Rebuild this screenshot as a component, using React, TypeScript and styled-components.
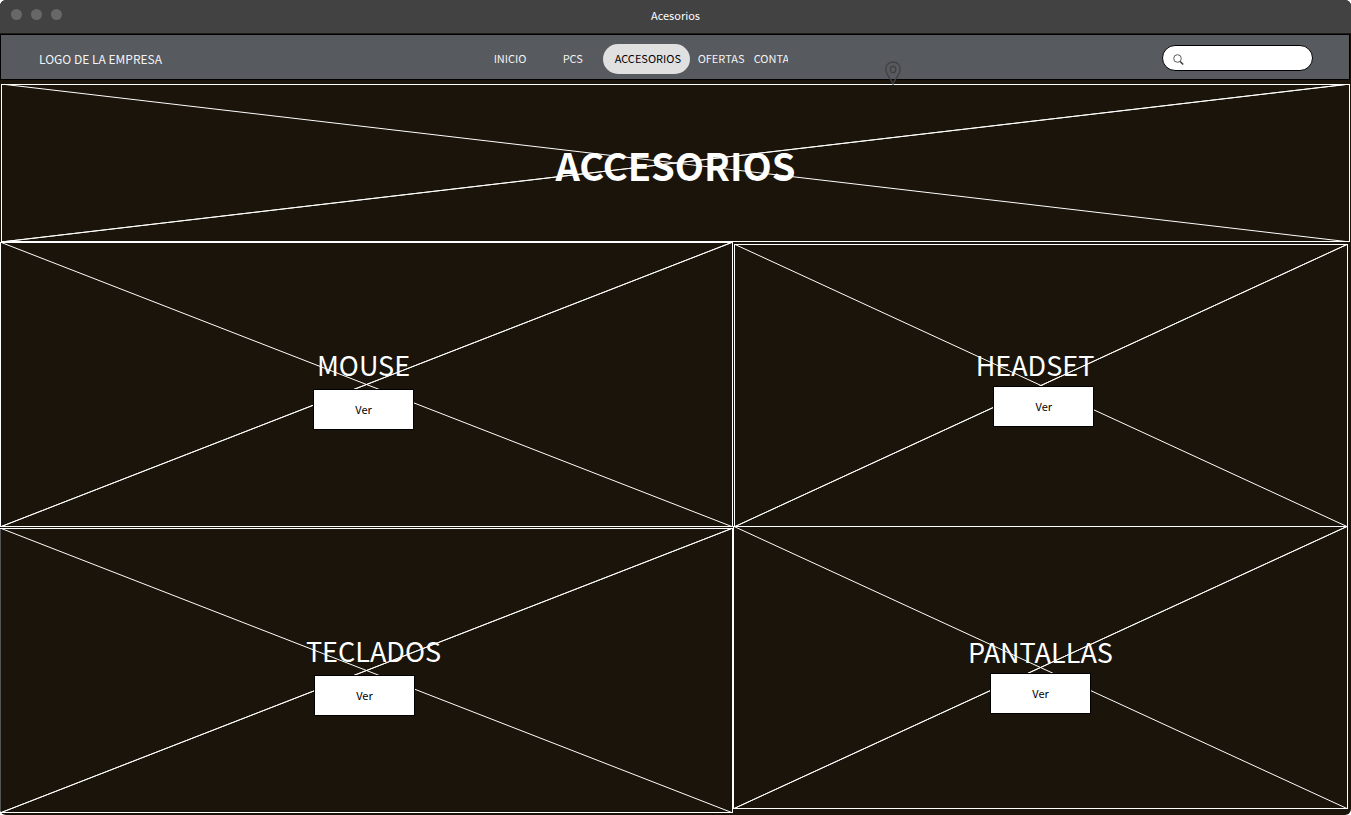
import React from 'react';
import styled, { createGlobalStyle } from 'styled-components';

const GlobalStyle = createGlobalStyle`
  * { box-sizing: border-box; }
  body {
    margin: 0;
    background: #ffffff;
    color: #ffffff;
    font-family: "Noto Sans CJK JP", "Noto Sans", sans-serif;
    font-size: 11px;
    line-height: 20px;
  }
`;

const Window = styled.div`
  display: flex;
  flex-direction: column;
  min-height: 100vh;
  overflow: hidden;
  border-radius: 6px;
  background: #1a140a;
`;

const TitleBar = styled.header`
  display: grid;
  grid-template-columns: 1fr auto 1fr;
  align-items: center;
  height: 34px;
  padding: 0 11px 4px;
  background: #424242;
  border-bottom: 1px solid #1e1c18;
`;

const WindowDots = styled.div`
  display: flex;
  gap: 9px;
`;

const Dot = styled.span`
  width: 11px;
  height: 11px;
  border-radius: 50%;
  background: #676767;
`;

const NavBar = styled.div`
  position: relative;
  display: grid;
  grid-template-columns: 455fr 820fr;
  align-items: center;
  height: 46px;
  margin-right: 1px;
  padding: 0 36px 0 38px;
  background: #575a5f;
  border: 1px solid #000000;
`;

const Logo = styled.a`
  color: #f4f4f4;
  font-size: 12px;
  text-decoration: none;
  padding-top: 4px;
`;

const NavArea = styled.div`
  display: flex;
  align-items: center;
  justify-content: space-between;
  padding-top: 2px;
`;

const Links = styled.nav`
  display: flex;
  align-items: center;
  padding-top: 2px;
`;

const NavLink = styled.a<{ $width: number; $active?: boolean }>`
  width: ${(p) => p.$width}px;
  height: 30px;
  line-height: 28px;
  overflow: hidden;
  white-space: nowrap;
  text-decoration: none;
  border-radius: 15px;
  color: ${(p) => (p.$active ? '#000000' : '#f4f4f4')};
  background: ${(p) => (p.$active ? '#e0e0e0' : 'transparent')};
  padding-left: ${(p) => (p.$active ? 12 : 0)}px;
  margin-right: ${(p) => (p.$active ? 8 : 0)}px;
`;

const ClippedLink = styled(NavLink)`
  border-radius: 0;
`;

const SearchBox = styled.label`
  display: flex;
  align-items: center;
  gap: 4px;
  width: 151px;
  height: 26px;
  padding: 0 10px;
  border: 1px solid #000000;
  border-radius: 13px;
  background: #ffffff;
`;

const SearchIcon = styled.svg`
  flex: none;
  width: 11px;
  height: 11px;
  margin-top: 3px;
`;

const SearchInput = styled.input`
  flex: 1;
  min-width: 0;
  padding: 0;
  border: 0;
  outline: 0;
  background: transparent;
  font: inherit;
`;

const Pin = styled.svg`
  position: absolute;
  top: 26px;
  left: 66%;
  margin-left: -6px;
  width: 16px;
  height: 24px;
  z-index: 1;
`;

const Placeholder = styled.svg`
  position: absolute;
  inset: 0;
  width: 100%;
  height: 100%;
`;

const Hero = styled.section`
  position: relative;
  display: flex;
  align-items: center;
  justify-content: center;
  height: 158px;
  margin: 4px 1px 0;
`;

const HeroTitle = styled.h1`
  position: relative;
  margin: 0;
  padding-top: 4px;
  font-size: 38px;
  line-height: 64px;
  font-weight: 700;
`;

const Columns = styled.main`
  display: flex;
  align-items: flex-start;
  padding-right: 3px;
`;

const LeftColumn = styled.div`
  display: flex;
  flex-direction: column;
  flex: 733 1 0;
  gap: 1px;
`;

const RightColumn = styled.div`
  display: flex;
  flex-direction: column;
  flex: 615 1 0;
  padding-top: 2px;
`;

const Tile = styled.section<{ $height: number; $padding: string; $margin?: string }>`
  position: relative;
  display: flex;
  justify-content: center;
  height: ${(p) => p.$height}px;
  padding: ${(p) => p.$padding};
  margin: ${(p) => p.$margin ?? '0'};
`;

const TileContent = styled.div<{ $align: string; $gap: number; $inset: number }>`
  position: relative;
  display: flex;
  flex-direction: column;
  align-items: ${(p) => p.$align};
  gap: ${(p) => p.$gap}px;
  & > button { margin-left: ${(p) => p.$inset}px; }
`;

const TileTitle = styled.h2`
  margin: 0;
  font-size: 27px;
  line-height: 40px;
  font-weight: 400;
`;

const ViewButton = styled.button`
  width: 101px;
  height: 41px;
  padding: 0 0 2px;
  border: 1px solid #000000;
  background: #ffffff;
  color: #000000;
  font: inherit;
  cursor: pointer;
`;

function CrossedBox({ leftEdge = '#ffffff' }: { leftEdge?: string }) {
  return (
    <Placeholder aria-hidden="true" stroke="#ffffff" strokeWidth="1">
      <line x1="0" y1="0" x2="100%" y2="100%" />
      <line x1="0" y1="100%" x2="100%" y2="0" />
      <line x1="0" y1="100%" x2="100%" y2="0" />
      <line x1="0" y1="0" x2="0" y2="100%" strokeWidth="2" stroke={leftEdge} />
      <line x1="0" y1="0" x2="100%" y2="0" strokeWidth="2" />
      <line x1="100%" y1="0" x2="100%" y2="100%" strokeWidth="2" />
      <line x1="0" y1="100%" x2="100%" y2="100%" strokeWidth="2" />
    </Placeholder>
  );
}

interface CategoryProps {
  title: string;
  height: number;
  padding: string;
  margin?: string;
  align?: string;
  gap: number;
  inset?: number;
  leftEdge?: string;
}

function Category({ title, height, padding, margin, align = 'center', gap, inset = 0, leftEdge }: CategoryProps) {
  return (
    <Tile $height={height} $padding={padding} $margin={margin}>
      <CrossedBox leftEdge={leftEdge} />
      <TileContent $align={align} $gap={gap} $inset={inset}>
        <TileTitle>{title}</TileTitle>
        <ViewButton type="button">Ver</ViewButton>
      </TileContent>
    </Tile>
  );
}

export default function App() {
  return (
    <>
      <GlobalStyle />
      <Window>
        <TitleBar>
          <WindowDots>
            <Dot />
            <Dot />
            <Dot />
          </WindowDots>
          <span>Acesorios</span>
        </TitleBar>
        <NavBar>
          <Logo href="#">LOGO DE LA EMPRESA</Logo>
          <NavArea>
            <Links>
              <NavLink href="#" $width={69}>INICIO</NavLink>
              <NavLink href="#" $width={40}>PCS</NavLink>
              <NavLink href="#" $width={87} $active>ACCESORIOS</NavLink>
              <NavLink href="#" $width={56}>OFERTAS</NavLink>
              <ClippedLink href="#" $width={34}>CONTA</ClippedLink>
            </Links>
            <SearchBox aria-label="Buscar">
              <SearchIcon viewBox="0 0 11 11" fill="none" stroke="#333333">
                <circle cx="4.5" cy="4.5" r="3.8" strokeWidth="0.8" />
                <path d="M7.2 7.4 10.2 10.4" strokeWidth="1.4" />
              </SearchIcon>
              <SearchInput type="text" aria-label="Buscar" />
            </SearchBox>
          </NavArea>
          <Pin viewBox="0 0 16 24" fill="none" stroke="#424242" strokeWidth="1.4">
            <path d="M8 23C6.4 18.3 .8 13.6 .8 8.2a7.2 7.2 0 0 1 14.4 0C15.2 13.6 9.6 18.3 8 23Z" />
            <ellipse cx="8" cy="8.5" rx="2.7" ry="3.2" />
          </Pin>
        </NavBar>
        <Hero>
          <CrossedBox />
          <HeroTitle>ACCESORIOS</HeroTitle>
        </Hero>
        <Columns>
          <LeftColumn>
            <Category title="MOUSE" height={285} padding="103px 6px 0 0" gap={4} />
            <Category
              title="TECLADOS"
              height={285}
              padding="103px 0 0 14px"
              gap={4}
              align="flex-start"
              inset={8}
              leftEdge="#555555"
            />
          </LeftColumn>
          <RightColumn>
            <Category title="HEADSET" height={283} padding="101px 12px 0 0" margin="0 0 0 1px" gap={1} align="flex-end" />
            <Category title="PANTALLAS" height={283} padding="106px 0 0" margin="-1px 0 0" gap={1} />
          </RightColumn>
        </Columns>
      </Window>
    </>
  );
}
